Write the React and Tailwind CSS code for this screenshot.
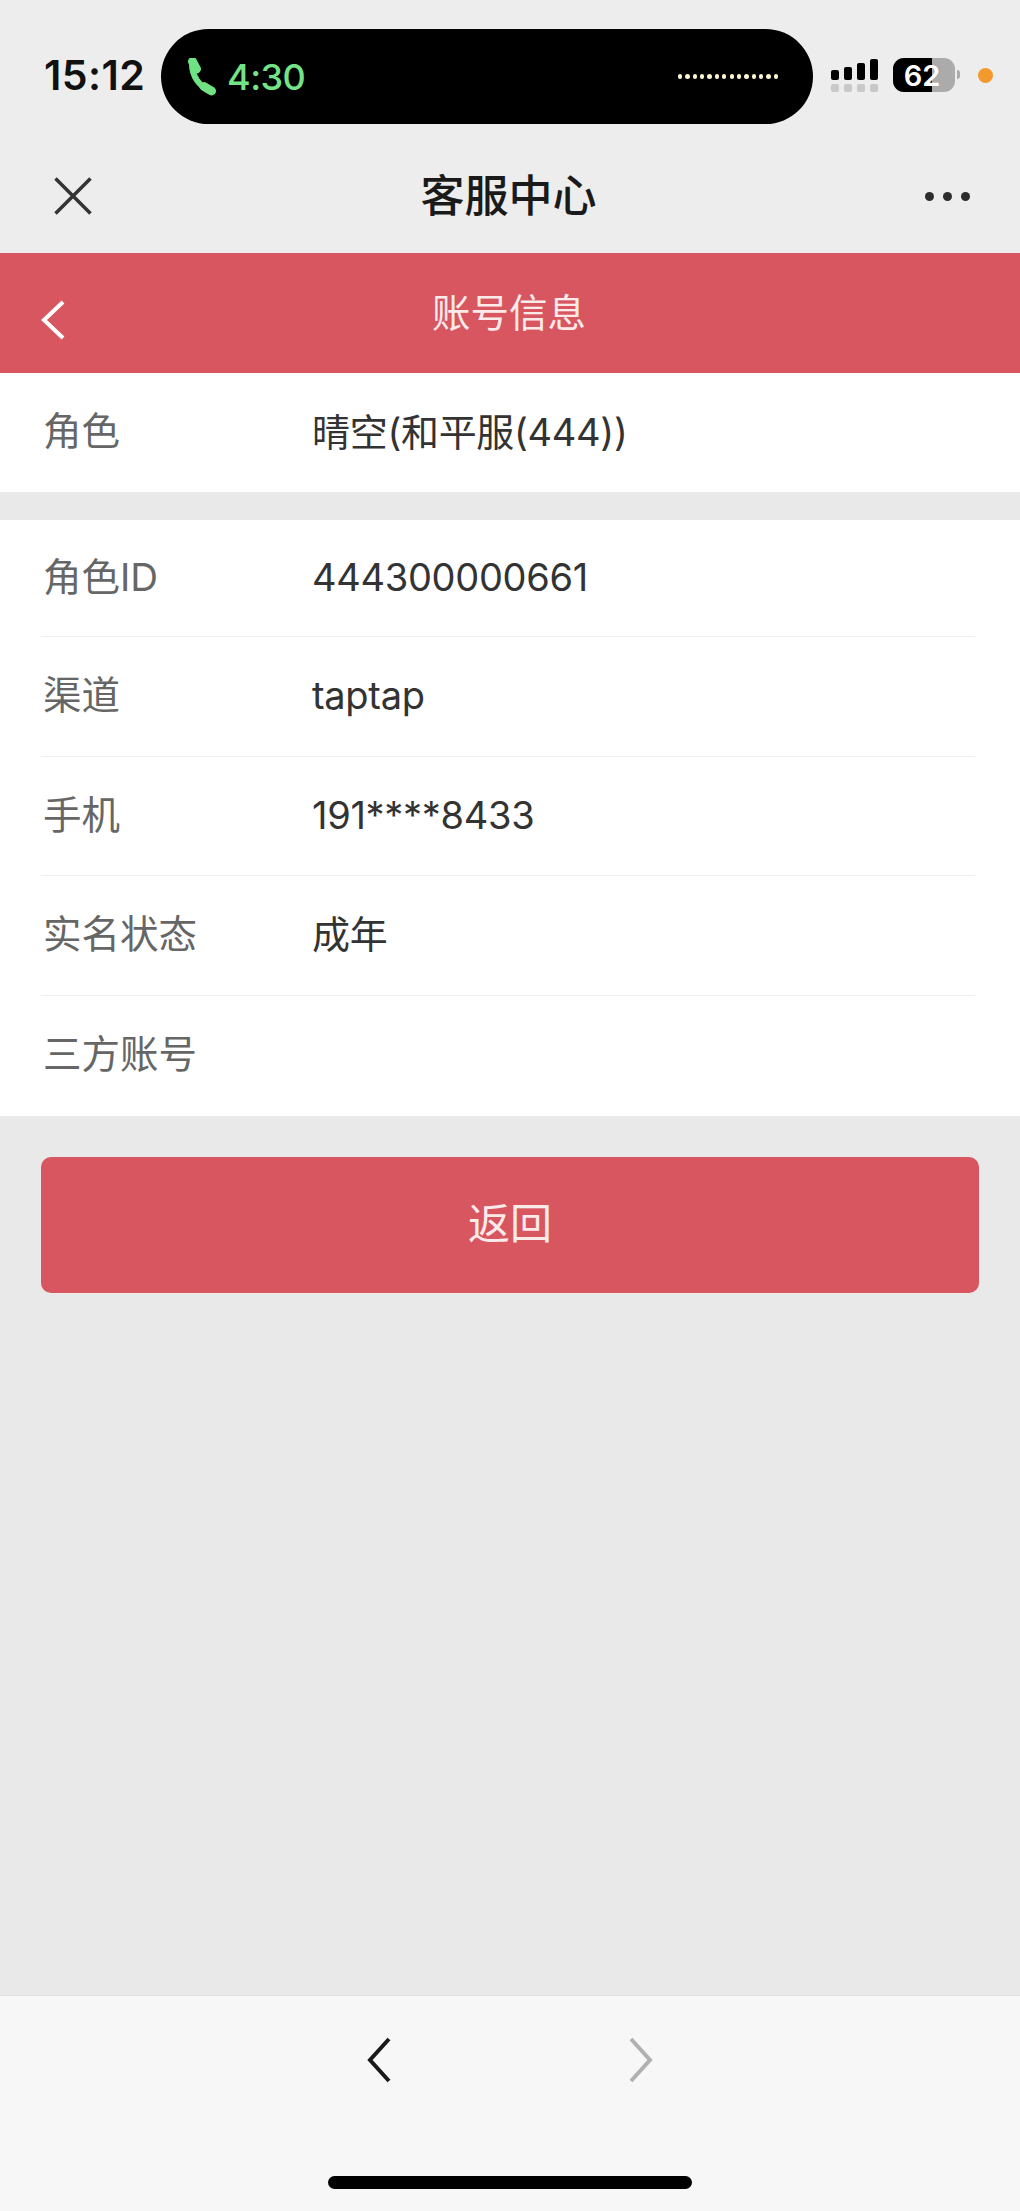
import React from "react";

const rows = [
  { label: "角色ID", value: "444300000661" },
  { label: "渠道", value: "taptap" },
  { label: "手机", value: "191****8433" },
  { label: "实名状态", value: "成年" },
  { label: "三方账号", value: "" },
];

const InfoRow = ({ label, value }) => (
  <div className="flex h-full items-center pb-[2px] pl-[2px]">
    <div className="w-[269px] text-[38.5px] leading-none text-[#666]">{label}</div>
    <div className="text-[38px] leading-none tracking-[-0.3px] text-[#333]">{value}</div>
  </div>
);

const StatusBar = () => (
  <div className="flex h-[124px] items-start pt-[29px]">
    <div className="ml-[44px] mt-[23px] w-[117px] text-[41px] font-semibold leading-[46px] tracking-[0.4px] text-[#111]">15:12</div>
    <div className="flex h-[95px] w-[652px] items-center rounded-full bg-black pl-[26px] pr-[35px]">
      <svg className="h-[38px] w-[30px]" viewBox="0 0 30 38" fill="none">
        <path d="M5 6C5 18 12 28 23 33" stroke="#6fe283" strokeWidth="6" strokeLinecap="round" />
        <path d="M5.5 3.5L9.5 11" stroke="#6fe283" strokeWidth="9" strokeLinecap="round" />
        <path d="M17 28.5L24.5 33" stroke="#6fe283" strokeWidth="9" strokeLinecap="round" />
      </svg>
      <span className="ml-[10px] text-[36px] font-medium leading-none tracking-[-0.5px] text-[#74e387]">4:30</span>
      <div className="ml-auto flex gap-[3.2px]">
        {Array.from({ length: 14 }).map((_, i) => (
          <div key={i} className="size-[4.2px] rounded-full bg-[#fff6d2]" />
        ))}
      </div>
    </div>
    <div className="ml-[18px] mt-[30px] flex w-[47px] flex-col gap-[4px]">
      <div className="flex h-[21px] items-end justify-between">
        <div className="h-[10px] w-[8px] rounded-[2px] bg-black" />
        <div className="h-[13px] w-[8px] rounded-[2px] bg-black" />
        <div className="h-[17px] w-[8px] rounded-[2px] bg-black" />
        <div className="h-[21px] w-[8px] rounded-[2px] bg-black" />
      </div>
      <div className="flex justify-between">
        {[0, 1, 2, 3].map((i) => (
          <div key={i} className="size-[8px] rounded-[2px] bg-[#c8c8c8]" />
        ))}
      </div>
    </div>
    <div className="relative ml-[15px] mt-[29px] flex h-[34px] w-[62px] overflow-hidden rounded-[11px] bg-[#ababab]">
      <div className="h-full w-[39px] bg-black" />
      <span className="absolute inset-0 flex items-center justify-center pr-[4px] text-[29px] font-semibold leading-none text-white">62</span>
    </div>
    <div className="ml-[2px] mt-[41px] h-[9px] w-[3px] rounded-r-full bg-[#ababab]" />
    <div className="ml-[18px] mt-[39px] size-[15px] rounded-full bg-[#f39a2d]" />
  </div>
);

const App = () => {
  return (
    <div className="flex h-[2211px] w-full flex-col overflow-hidden bg-[#e9e9e9] font-['Inter','Noto_Sans_CJK_SC',sans-serif]">
      <div className="h-[253px] shrink-0 bg-[#ededed]">
        <StatusBar />
        <div className="flex h-[129px] items-center justify-between pl-[54px] pr-[50px] pt-[15px]">
          <svg className="size-[38px]" viewBox="0 0 38 38" fill="none">
            <path d="M1.5 1.5L36.5 36.5M36.5 1.5L1.5 36.5" stroke="#333" strokeWidth="3.5" />
          </svg>
          <div className="text-[44px] font-medium leading-none text-[#1a1a1a]">客服中心</div>
          <div className="flex w-[45px] justify-between">
            <div className="size-[9px] rounded-full bg-[#2d2d2d]" />
            <div className="size-[9px] rounded-full bg-[#2d2d2d]" />
            <div className="size-[9px] rounded-full bg-[#2d2d2d]" />
          </div>
        </div>
      </div>

      <div className="relative flex h-[120px] shrink-0 items-center justify-center bg-[#d75660]">
        <svg className="absolute left-[41px] top-[47px] h-[40px] w-[25px]" viewBox="0 0 25 40" fill="none">
          <path d="M22 2L3 20L22 38" stroke="#fff" strokeWidth="4" />
        </svg>
        <div className="pr-[2px] text-[38.5px] leading-none text-[#fbeaea]">账号信息</div>
      </div>

      <div className="h-[119px] shrink-0 bg-white pl-[41px]">
        <InfoRow label="角色" value="晴空(和平服(444))" />
      </div>

      <div className="mt-[28px] h-[596px] shrink-0 bg-white pl-[41px] pr-[45px]">
        {rows.map((row, i) => (
          <div
            key={row.label}
            className={`${i === 0 ? "h-[117px]" : "h-[119.5px]"} ${i < rows.length - 1 ? "border-b border-[#f1f1f1]" : ""}`}
          >
            <InfoRow label={row.label} value={row.value} />
          </div>
        ))}
      </div>

      <button className="mx-[41px] mt-[41px] flex h-[136px] shrink-0 items-center justify-center rounded-[10px] bg-[#d75660] pb-[3px] text-[42px] leading-none text-[#fbeaea]">
        返回
      </button>

      <div className="mt-auto flex h-[216px] shrink-0 flex-col items-center border-t border-[#e2e2e2] bg-[#f7f7f7]">
        <div className="mt-[41px] flex w-[286px] justify-between">
          <svg className="h-[46px] w-[24px]" viewBox="0 0 24 46" fill="none">
            <path d="M22 2L3 23L22 44" stroke="#1a1a1a" strokeWidth="4" />
          </svg>
          <svg className="h-[46px] w-[24px]" viewBox="0 0 24 46" fill="none">
            <path d="M2 2L21 23L2 44" stroke="#b0b0b0" strokeWidth="4" />
          </svg>
        </div>
        <div className="mt-[93px] h-[13px] w-[364px] rounded-full bg-black" />
      </div>
    </div>
  );
};

export default App;
